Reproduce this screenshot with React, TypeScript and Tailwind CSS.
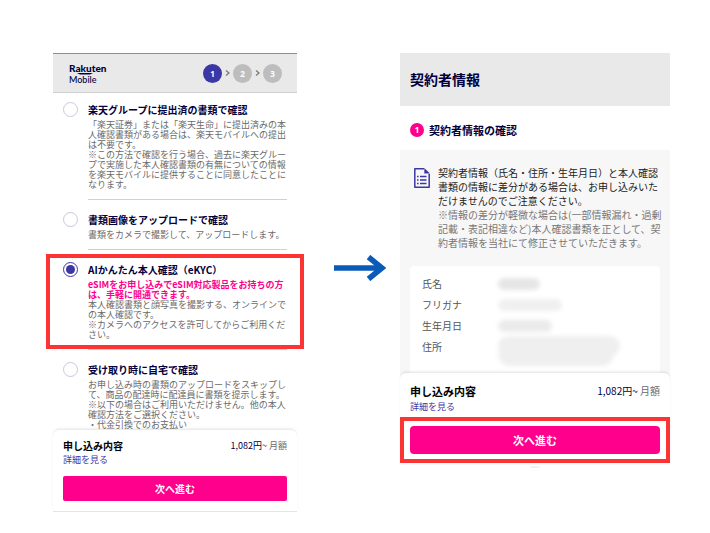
import React from "react";

interface Method {
  id: string;
  title: string;
  notice?: string[];
  lines: string[];
}

const methods: Method[] = [
  {
    id: "group",
    title: "楽天グループに提出済の書類で確認",
    lines: [
      "「楽天証券」または「楽天生命」に提出済みの本",
      "人確認書類がある場合は、楽天モバイルへの提出",
      "は不要です。",
      "※この方法で確認を行う場合、過去に楽天グルー",
      "プで実施した本人確認書類の有無についての情報",
      "を楽天モバイルに提供することに同意したことに",
      "なります。",
    ],
  },
  {
    id: "upload",
    title: "書類画像をアップロードで確認",
    lines: ["書類をカメラで撮影して、アップロードします。"],
  },
  {
    id: "ekyc",
    title: "AIかんたん本人確認（eKYC）",
    notice: ["eSIMをお申し込みでeSIM対応製品をお持ちの方", "は、手軽に開通できます。"],
    lines: [
      "本人確認書類と顔写真を撮影する、オンラインで",
      "の本人確認です。",
      "※カメラへのアクセスを許可してからご利用くだ",
      "さい。",
    ],
  },
  {
    id: "home",
    title: "受け取り時に自宅で確認",
    lines: [
      "お申し込み時の書類のアップロードをスキップし",
      "て、商品の配達時に配達員に書類を提示します。",
      "※以下の場合はご利用いただけません。他の本人",
      "確認方法をご選択ください。",
      "・代金引換でのお支払い",
    ],
  },
];

const cautions = [
  "契約者情報（氏名・住所・生年月日）と本人確認",
  "書類の情報に差分がある場合は、お申し込みいた",
  "だけませんのでご注意ください。",
];

const notes = [
  "※情報の差分が軽微な場合は(一部情報漏れ・過剰",
  "記載・表記相違など)本人確認書類を正として、契",
  "約者情報を当社にて修正させていただきます。",
];

const fields = [
  { label: "氏名", mask: "w-[42px]" },
  { label: "フリガナ", mask: "w-[64px] opacity-60" },
  { label: "生年月日", mask: "w-[54px] opacity-80" },
];

function Lines({ items }: { items: string[] }) {
  return (
    <>
      {items.map((line) => (
        <span key={line} className="block whitespace-nowrap">
          {line}
        </span>
      ))}
    </>
  );
}

function Chevron() {
  return (
    <svg className="w-[11px] h-2" viewBox="0 0 11 8" fill="none" stroke="#777" strokeWidth="1.2">
      <path d="M4 1.5 7 4 4 6.5" />
    </svg>
  );
}

function Logo() {
  return (
    <div className="relative font-['Lato',sans-serif] text-[#00003e]">
      <p className="text-[10px]/[12px] font-black">Rakuten</p>
      <p className="text-[9px]/[11px] font-medium">Mobile</p>
      <svg className="absolute left-2 top-[11px] w-4 h-[2px]" viewBox="0 0 16 2" fill="#00003e">
        <path d="M0 0h16L13 1.5H3z" />
      </svg>
    </div>
  );
}

function Steps() {
  return (
    <ol className="flex items-center font-['Open_Sans',sans-serif] text-[8px]/[19px] font-bold text-white text-center">
      <li className="w-[19px] rounded-full bg-[#3b38a5]">1</li>
      <Chevron />
      <li className="w-[19px] rounded-full bg-[#bdbdbd]">2</li>
      <Chevron />
      <li className="w-[19px] rounded-full bg-[#bdbdbd]">3</li>
    </ol>
  );
}

function MethodItem({ method }: { method: Method }) {
  return (
    <li className="relative">
      <label className="flex">
        <input
          type="radio"
          name="method"
          defaultChecked={method.id === "ekyc"}
          className="appearance-none shrink-0 grid place-content-center w-[15px] h-[15px] mr-[10px] rounded-full border border-[#c9c8e0] checked:border-[#3b38a5] checked:before:w-[9px] checked:before:h-[9px] checked:before:rounded-full checked:before:bg-[#3b38a5]"
        />
        <div
          className={
            method.id === "home"
              ? "flex-1 min-w-0"
              : "flex-1 min-w-0 pb-[9px] border-b border-[#cfcee0]"
          }
        >
          <p className="text-[10px]/[16px] font-bold text-[#00003e]">{method.title}</p>
          <div className="mt-0.5 text-[9px]/[10px] text-[#6a6a6a]">
            {method.notice && (
              <strong className="font-bold text-[#ff008c]">
                <Lines items={method.notice} />
              </strong>
            )}
            <Lines items={method.lines} />
          </div>
        </div>
      </label>
      {method.id === "ekyc" && (
        <div className="absolute -inset-x-[17px] -top-2 bottom-px border-4 border-[#fd3434] pointer-events-none" />
      )}
    </li>
  );
}

function MethodScreen() {
  return (
    <section className="min-w-0">
      <div className="h-px bg-[#ff50b0]" />
      <header className="flex items-center justify-between h-[39px] pl-4 pr-[15px] bg-[#e9e9e9] border-b border-[#d0d0d0]">
        <Logo />
        <Steps />
      </header>
      <ul className="flex flex-col gap-3 px-[10px] pt-[9px]">
        {methods.map((method) => (
          <MethodItem key={method.id} method={method} />
        ))}
      </ul>
      <footer className="relative px-[10px] pt-2 pb-[10px] rounded-t-md bg-white border-b border-[#e4e4e4] shadow-[0_-2px_3px_-1px_rgba(0,0,0,0.12)]">
        <div className="flex items-center justify-between">
          <h2 className="text-[10px]/[16px] font-bold">申し込み内容</h2>
          <p className="text-[9px]/[16px] text-[#00003e]">
            1,082円~ <span className="text-[#6a6a6a]">月額</span>
          </p>
        </div>
        <a href="#detail" className="block w-fit text-[9px]/[12px] text-[#3b38a5]">
          詳細を見る
        </a>
        <button className="block w-full mt-[10px] h-[25px] rounded-xs bg-[#ff008c] text-[10px] font-bold text-white">
          次へ進む
        </button>
      </footer>
    </section>
  );
}

function DocumentIcon() {
  return (
    <svg className="shrink-0 w-4 h-5 mt-0.5" viewBox="0 0 16 20" fill="none" stroke="#3b38a5">
      <path d="M10 .8H.8v18.4h14.4V6" strokeWidth="1.5" strokeLinejoin="round" />
      <path d="M10.3 0 16 5.6h-5.7z" fill="#3b38a5" stroke="none" />
      <path d="M3 8.5h1.6M6 8.5h6.5M3 12h1.6M6 12h6.5M3 15.5h1.6M6 15.5h6.5" strokeWidth="1.3" />
    </svg>
  );
}

function ContractScreen() {
  return (
    <section className="min-w-0">
      <header className="h-[53px] px-[10px] bg-[#e9e9e9]">
        <h1 className="text-[14px]/[52px] font-bold text-[#00003e]">契約者情報</h1>
      </header>
      <div className="flex items-center gap-[5px] h-11 pt-1 px-[10px]">
        <span className="w-[14px] rounded-full bg-[#ff008c] font-['Open_Sans',sans-serif] text-[8px]/[14px] font-bold text-white text-center">
          1
        </span>
        <h2 className="text-[11px] font-bold text-[#00003e]">契約者情報の確認</h2>
      </div>
      <div className="px-[10px] pt-4 bg-[#f7f7f7]">
        <div className="flex gap-2 pl-1 text-[10px]/[14px]">
          <DocumentIcon />
          <div className="min-w-0">
            <p className="text-[#222]">
              <Lines items={cautions} />
            </p>
            <p className="text-[#777]">
              <Lines items={notes} />
            </p>
          </div>
        </div>
        <dl className="mt-4 px-3 pt-[7px] pb-[15px] rounded-sm bg-white text-[10px]/[21px] text-[#555]">
          {fields.map((field) => (
            <div key={field.label} className="flex items-center">
              <dt className="w-[76px]">{field.label}</dt>
              <dd className={`${field.mask} h-3 rounded-full bg-[#e6e6e6] blur-[2px]`} />
            </div>
          ))}
          <div className="flex">
            <dt className="w-[76px]">住所</dt>
            <dd className="blur-[2px]">
              <div className="w-[122px] h-5 rounded-full bg-[#efefef]" />
              <div className="w-[116px] h-[14px] -mt-1 rounded-b-xl bg-[#efefef]" />
            </dd>
          </div>
        </dl>
      </div>
      <footer className="relative rounded-t-md -mt-2 bg-white shadow-[0_-2px_3px_-1px_rgba(0,0,0,0.12)]">
        <div className="px-[10px] pt-[10px] pb-[3px]">
          <div className="flex items-center justify-between">
            <h2 className="text-[11px]/[16px] font-bold">申し込み内容</h2>
            <p className="text-[10px]/[16px] text-[#00003e]">
              1,082円~ <span className="text-[#6a6a6a]">月額</span>
            </p>
          </div>
          <a href="#detail" className="block w-fit mt-px text-[9px]/[14px] text-[#3b38a5]">
            詳細を見る
          </a>
        </div>
        <div className="p-1 px-[6px] border-4 border-[#fd3434]">
          <button className="block w-full h-7 my-px rounded-sm bg-[#ff008c] text-[11px] font-bold text-white">
            次へ進む
          </button>
        </div>
        <div className="mx-auto mt-[3px] w-[10px] h-[2px] rounded-t-full bg-[#f2f2f2]" />
      </footer>
    </section>
  );
}

function App() {
  return (
    <main
      lang="ja"
      className="grid grid-cols-[244fr_103fr_270fr] items-start pt-[53px] pl-[53px] pr-10 pb-5 bg-white font-['Noto_Sans_CJK_JP',sans-serif]"
    >
      <MethodScreen />
      <div className="flex justify-end pr-[14px] pt-[202px]">
        <svg className="w-[52px] h-[26px]" viewBox="0 0 52 26" fill="none" stroke="#0a5ab8">
          <path d="M0 13h47" strokeWidth="5.5" />
          <path d="M34.5 2 48 13 34.5 24" strokeWidth="5.5" />
        </svg>
      </div>
      <ContractScreen />
    </main>
  );
}

export default App;
